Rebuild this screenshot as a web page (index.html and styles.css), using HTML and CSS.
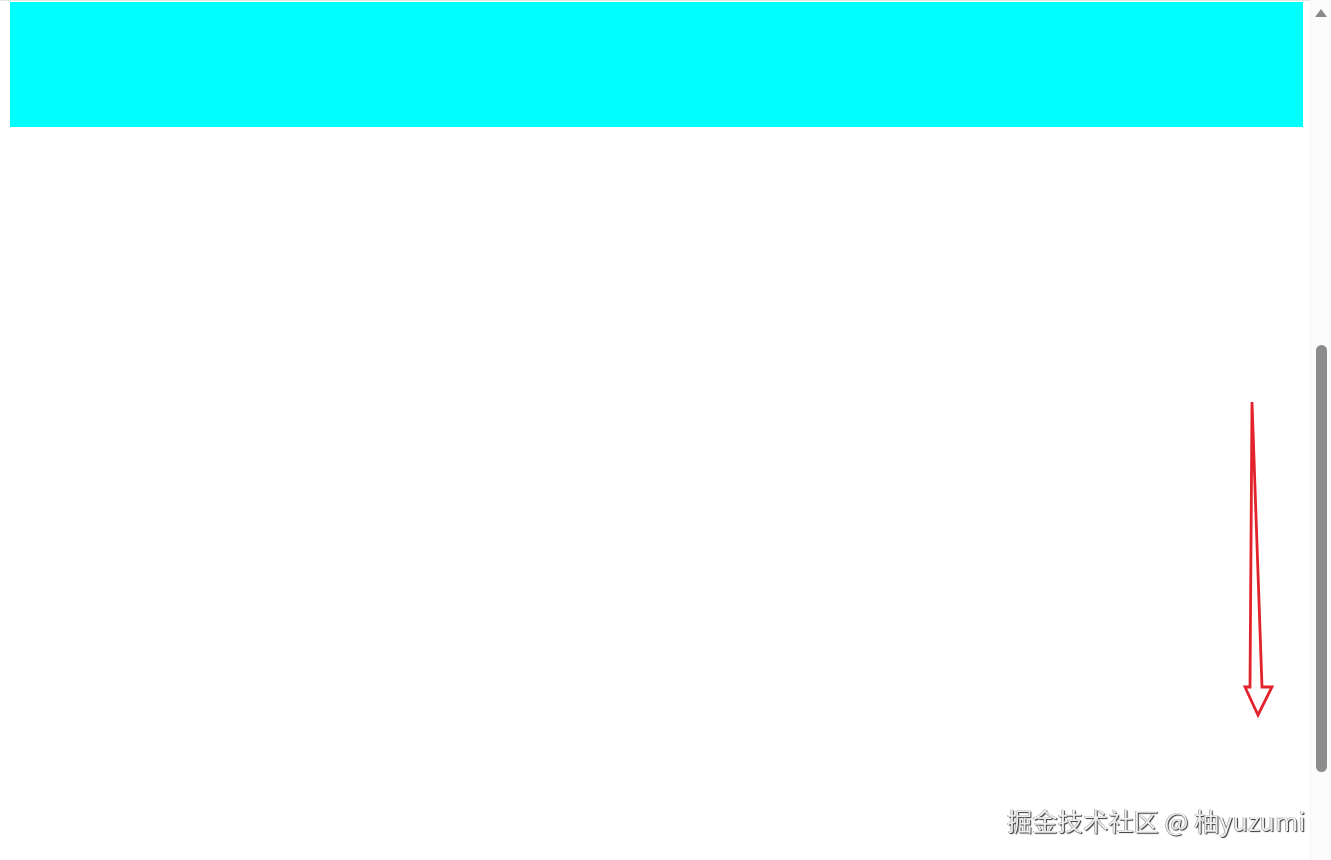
FILE: index.html
```html
<!DOCTYPE html>
<html lang="zh">
<head>
<meta charset="utf-8">
<title>demo</title>
<link rel="stylesheet" href="styles.css">
</head>
<body>
<div class="topline"></div>
<main class="page">
  <div class="block"></div>
</main>
<div class="scrollbar">
  <div class="scroll-up"></div>
  <div class="scroll-thumb"></div>
</div>
<svg class="annot" width="60" height="330" viewBox="0 0 60 330">
  <path d="M 22 12 L 20 297 L 15 297 L 28 325 L 42 297 L 32 297 Z" fill="none" stroke="#e3232b" stroke-width="2.8" stroke-linejoin="miter"/>
</svg>
<div class="watermark">掘金技术社区 @ 柚yuzumi</div>
</body>
</html>
```
FILE: styles.css
```css
html, body {
  margin: 0;
  padding: 0;
  width: 1331px;
  height: 860px;
  overflow: hidden;
  background: #ffffff;
  font-family: "Noto Sans CJK SC", "Noto Sans", sans-serif;
}
.topline {
  height: 1px;
  background: #e6e6e6;
  width: 1311px;
}
.page {
  padding: 1px 0 0 10px;
}
.block {
  width: 1293px;
  height: 125px;
  background: #00ffff;
}
.scrollbar {
  position: fixed;
  top: 0;
  right: 0;
  width: 20px;
  height: 860px;
  background: #fcfcfc;
  border-left: 1px solid #f4f4f4;
}
.scroll-up {
  position: absolute;
  top: 9px;
  left: 4px;
  width: 0;
  height: 0;
  border-left: 6px solid transparent;
  border-right: 6px solid transparent;
  border-bottom: 8px solid #8a8a8a;
}
.scroll-thumb {
  position: absolute;
  top: 345px;
  left: 5px;
  width: 11px;
  height: 427px;
  border-radius: 6px;
  background: #8c8c8c;
}
.annot {
  position: fixed;
  left: 1230px;
  top: 390px;
}
.watermark {
  position: fixed;
  left: 1007px;
  top: 801px;
  font-size: 25.3px;
  line-height: 38px;
  color: #eeeeee;
  text-shadow: 1px 1px 1px #333, -0.5px -0.5px 0 #888;
  white-space: nowrap;
}
```
